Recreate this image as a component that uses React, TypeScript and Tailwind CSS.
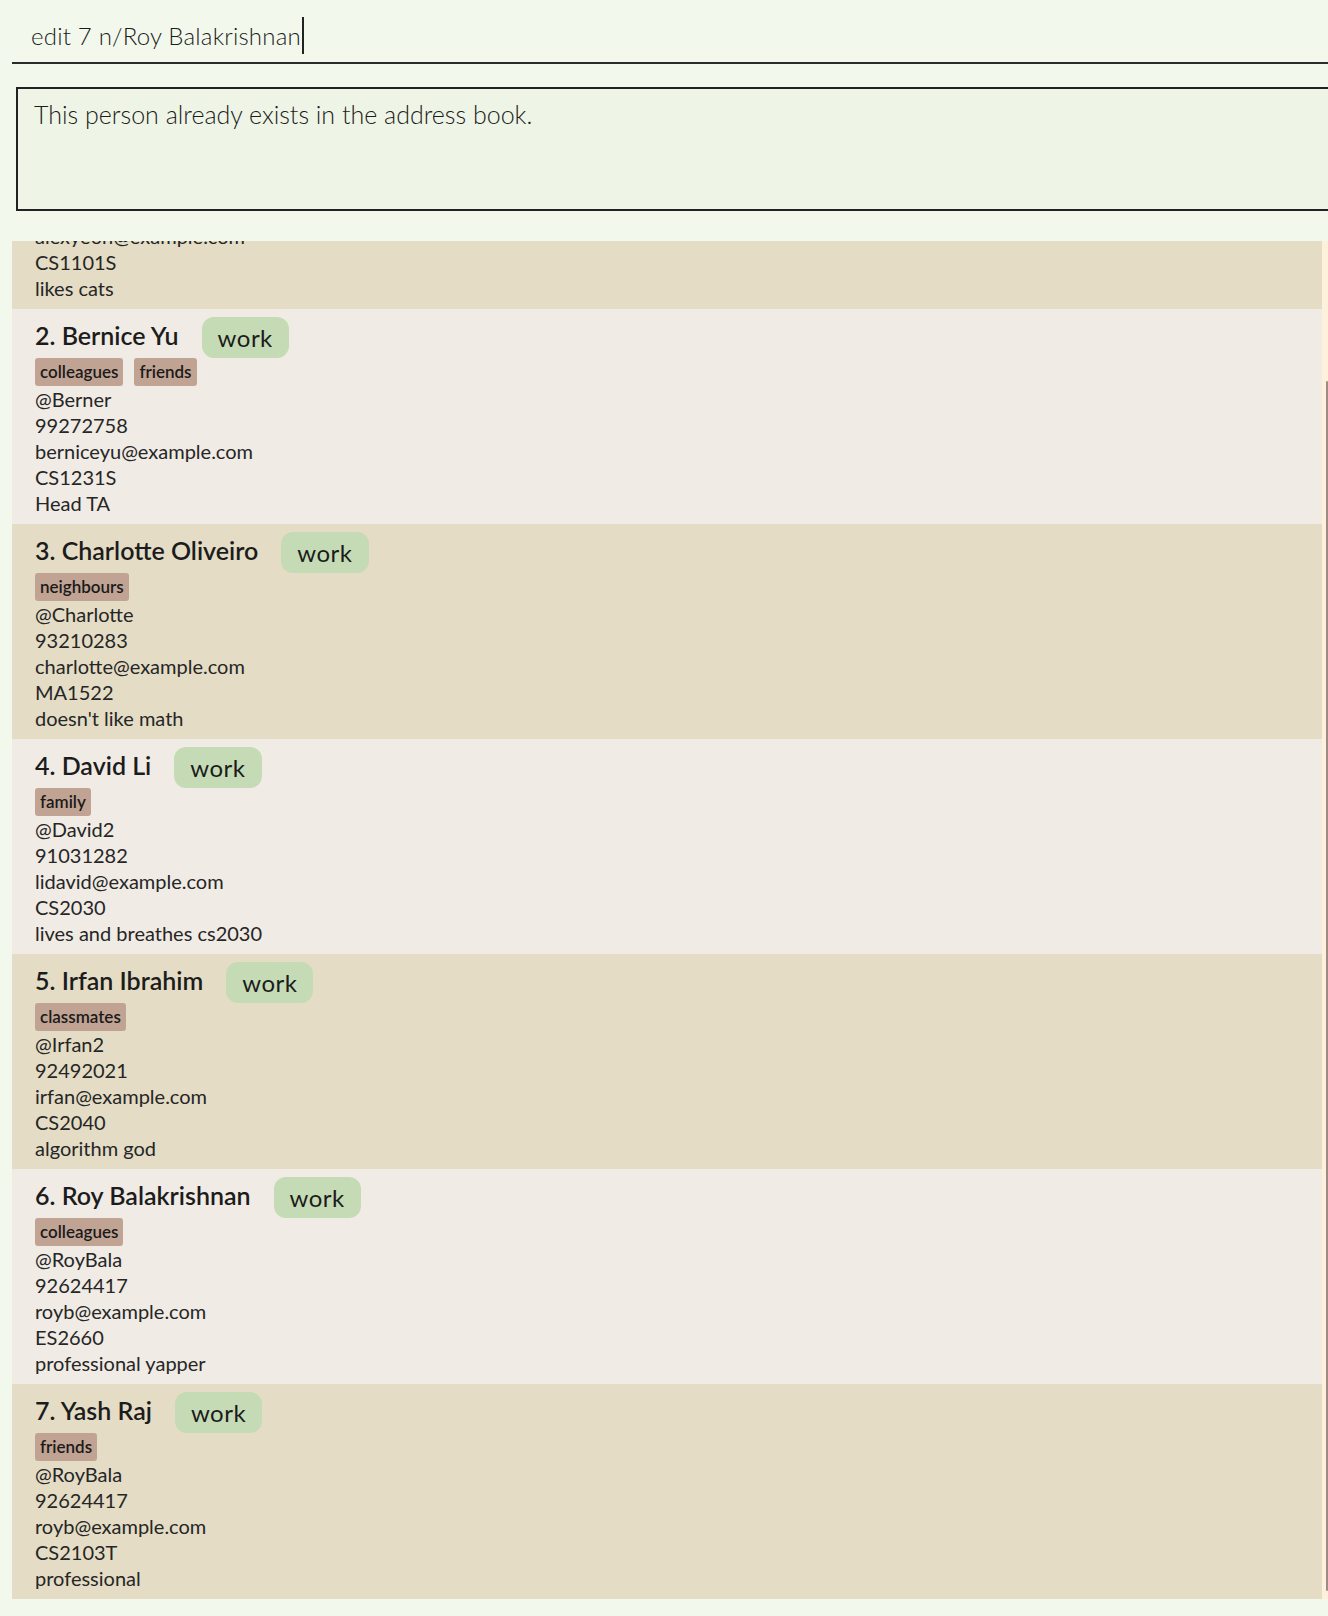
import { useEffect, useRef } from 'react';

type Person = {
  name: string;
  tags: string[];
  handle: string;
  phone: string;
  email: string;
  module: string;
  remark: string;
};

const people: Person[] = [
  { name: 'Alex Yeoh', tags: ['friends'], handle: '@AlexYeoh', phone: '87438807', email: 'alexyeoh@example.com', module: 'CS1101S', remark: 'likes cats' },
  { name: 'Bernice Yu', tags: ['colleagues', 'friends'], handle: '@Berner', phone: '99272758', email: 'berniceyu@example.com', module: 'CS1231S', remark: 'Head TA' },
  { name: 'Charlotte Oliveiro', tags: ['neighbours'], handle: '@Charlotte', phone: '93210283', email: 'charlotte@example.com', module: 'MA1522', remark: "doesn't like math" },
  { name: 'David Li', tags: ['family'], handle: '@David2', phone: '91031282', email: 'lidavid@example.com', module: 'CS2030', remark: 'lives and breathes cs2030' },
  { name: 'Irfan Ibrahim', tags: ['classmates'], handle: '@Irfan2', phone: '92492021', email: 'irfan@example.com', module: 'CS2040', remark: 'algorithm god' },
  { name: 'Roy Balakrishnan', tags: ['colleagues'], handle: '@RoyBala', phone: '92624417', email: 'royb@example.com', module: 'ES2660', remark: 'professional yapper' },
  { name: 'Yash Raj', tags: ['friends'], handle: '@RoyBala', phone: '92624417', email: 'royb@example.com', module: 'CS2103T', remark: 'professional' },
];

const PersonCard = ({ person, index }: { person: Person; index: number }) => (
  <div
    className={`h-[215px] shrink-0 px-[23px] pt-[8px] pb-[8px] ${
      index % 2 === 1 ? 'bg-[#e4dcc5]' : 'bg-[#f0ebe4]'
    }`}
  >
    {/* Name + role badge */}
    <div className="flex items-center h-[41px] gap-[23px]">
      <div className="text-[25px] font-semibold text-[#1c1c1c] leading-none pb-[4px]">
        {index}. {person.name}
      </div>
      <div className="h-[41px] px-[16px] rounded-[12px] bg-[#c5dbb5] flex items-center text-[24px] tracking-[0.5px] text-[#1c1c1c]">
        work
      </div>
    </div>

    {/* Tags */}
    <div className="flex gap-[11px] h-[28px]">
      {person.tags.map((tag) => (
        <span
          key={tag}
          className="h-[28px] px-[5px] rounded-[3px] bg-[#c0a392] text-[17px] font-semibold leading-[28px] text-[#1a1a1a]"
        >
          {tag}
        </span>
      ))}
    </div>

    {/* Details */}
    <div className="text-[20px] leading-[26px] text-[#262626]">
      <div>{person.handle}</div>
      <div>{person.phone}</div>
      <div>{person.email}</div>
      <div>{person.module}</div>
      <div>{person.remark}</div>
    </div>
  </div>
);

const App = () => {
  const listRef = useRef<HTMLDivElement>(null);

  useEffect(() => {
    // list is shown scrolled to the bottom
    if (listRef.current) {
      listRef.current.scrollTop = listRef.current.scrollHeight;
    }
  }, []);

  return (
    <div
      className="w-full h-[1616px] bg-[#f3f8ed] overflow-hidden"
      style={{ fontFamily: 'Lato, "Noto Sans", sans-serif' }}
    >
      {/* Command box */}
      <div className="ml-[12px] h-[64px] border-b-2 border-[#2b2b2b] flex items-center pl-[19px] pt-[9px]">
        <span className="text-[24px] font-light text-[#1c1c1c] tracking-[0.2px]">edit 7 n/Roy Balakrishnan</span>
        <span className="inline-block w-[2px] h-[37px] bg-[#222] ml-[1px]" />
      </div>

      {/* Result display */}
      <div className="mt-[23px] ml-[16px] mr-[-20px] h-[124px] border-2 border-[#222] bg-[#eff5e6] pl-[16px] pt-[9px]">
        <div className="text-[25px] font-light text-[#1c1c1c] leading-[32px]">
          This person already exists in the address book.
        </div>
      </div>

      {/* Person list */}
      <div className="mt-[30px] ml-[12px] h-[1358px] flex">
        <div ref={listRef} className="flex-1 flex flex-col overflow-y-scroll [scrollbar-width:none]">
          {people.map((p, i) => (
            <PersonCard key={i} person={p} index={i + 1} />
          ))}
        </div>
        <div className="w-[6px] bg-[#fdf1dc] flex flex-col items-end pt-[140px]">
          <div className="w-[2px] h-[1210px] bg-[#a08a85] rounded-[1px]" />
        </div>
      </div>
    </div>
  );
};

export default App;
